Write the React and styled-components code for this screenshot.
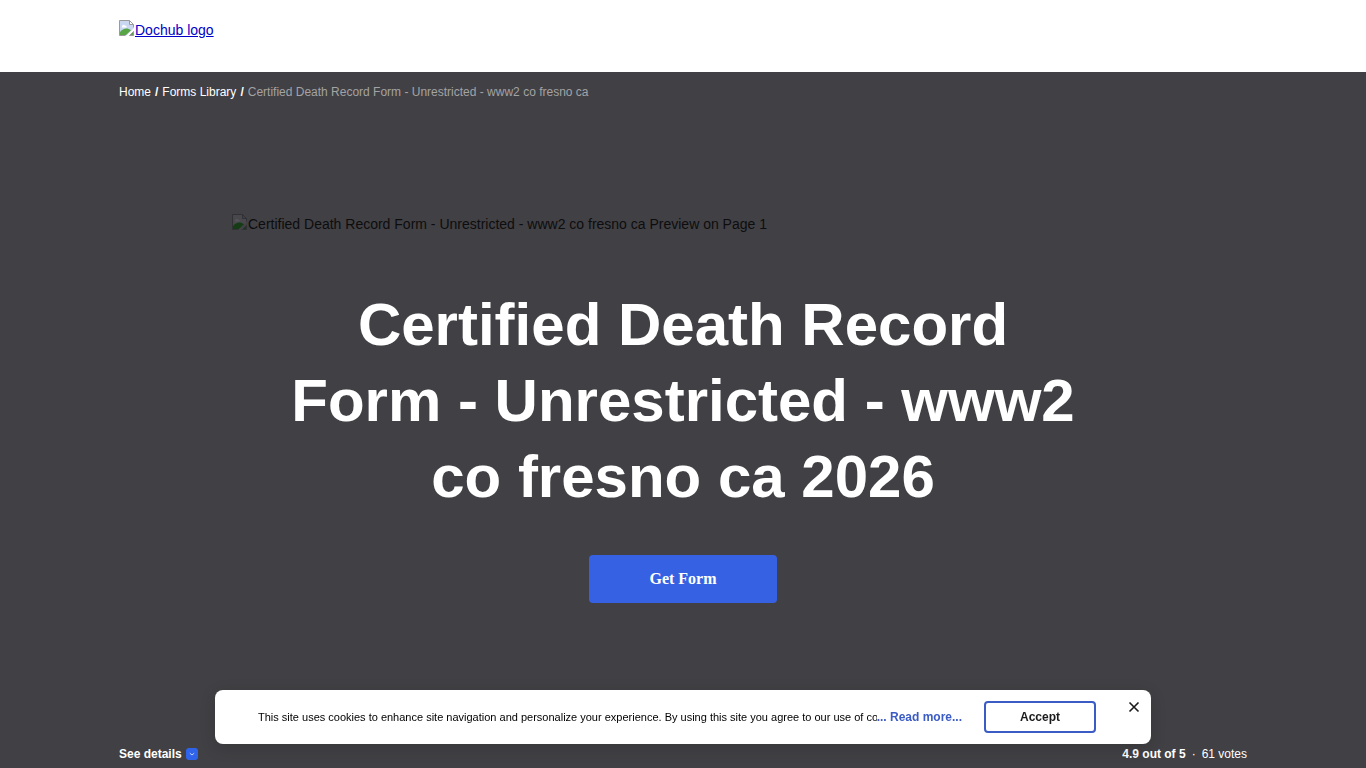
import React, {useState} from 'react';
import styled, {createGlobalStyle} from 'styled-components';

const GlobalStyle = createGlobalStyle`
	*,
	*::before,
	*::after {
		box-sizing: border-box;
	}

	body {
		margin: 0;
		font-family: 'Liberation Sans', Arial, sans-serif;
		font-size: 14px;
		line-height: 20px;
		color: #000;
	}
`;

const Page = styled.div`
	display: flex;
	flex-direction: column;
	min-height: 100vh;
`;

const Container = styled.div`
	width: 100%;
	max-width: 1176px;
	margin: 0 auto;
	padding: 0 24px;
`;

const Header = styled.header`
	flex: none;
	height: 72px;
	padding-top: 20px;
	background: #fff;
`;

const LogoLink = styled.a`
	display: inline-flex;
	align-items: flex-start;
	color: #0000c8;
`;

const Hero = styled.main`
	flex: 1;
	display: flex;
	flex-direction: column;
	background: #414044;
	color: #fff;
`;

const Breadcrumbs = styled.nav`
	display: flex;
	gap: 4px;
	padding-top: 10px;
	font-size: 12px;
`;

const Crumb = styled.a`
	color: #fff;
	text-decoration: none;
`;

const Slash = styled.span`
	font-weight: 700;
`;

const CurrentCrumb = styled.span`
	color: #a3a3a5;
`;

const HeroBody = styled.div`
	flex: 1;
	display: flex;
	flex-direction: column;
	align-items: center;
	padding: 112px 24px 40px;
`;

const Preview = styled.div`
	display: flex;
	align-items: flex-start;
	width: 100%;
	max-width: 902px;
	color: #0d0d0e;
`;

const Title = styled.h1`
	max-width: 800px;
	margin: 53px 0 40px;
	font-size: 60px;
	line-height: 76px;
	font-weight: 700;
	text-align: center;
`;

const GetFormButton = styled.button`
	min-width: 188px;
	height: 48px;
	border: 0;
	border-radius: 4px;
	background: #3761e3;
	color: #fff;
	font: 700 16px/24px 'Liberation Serif', 'Times New Roman', serif;
	cursor: pointer;
`;

const HeroFooter = styled.div`
	display: flex;
	justify-content: space-between;
	padding-bottom: 4px;
	font-size: 12px;
`;

const DetailsButton = styled.button`
	display: flex;
	align-items: center;
	gap: 4px;
	padding: 0;
	border: 0;
	background: none;
	color: inherit;
	font: inherit;
	font-weight: 700;
	cursor: pointer;
`;

const Rating = styled.div`
	display: flex;
	gap: 6px;
`;

const CookieBar = styled.section`
	position: fixed;
	left: 50%;
	bottom: 24px;
	transform: translateX(-50%);
	display: flex;
	align-items: center;
	width: calc(100% - 48px);
	max-width: 936px;
	height: 54px;
	padding: 0 9px 0 43px;
	border-radius: 8px;
	background: #fff;
	color: #1b1b1d;
	box-shadow: 0 4px 16px rgba(0, 0, 0, 0.16);
`;

const CookieText = styled.p`
	flex: 1;
	min-width: 0;
	margin: 0;
	overflow: hidden;
	color: #000;
	font-size: 11px;
	white-space: nowrap;
`;

const ReadMore = styled.a`
	color: #3b5bc5;
	font-size: 12px;
	font-weight: 700;
	text-decoration: none;
	white-space: nowrap;
`;

const AcceptButton = styled.button`
	width: 112px;
	height: 32px;
	margin: 0 30px 0 22px;
	border: 2px solid #3b5bc5;
	border-radius: 4px;
	background: #fff;
	color: #1b1b1d;
	font: inherit;
	font-size: 12px;
	font-weight: 700;
	cursor: pointer;
`;

const CloseButton = styled.button`
	align-self: flex-start;
	display: flex;
	margin-top: 9px;
	padding: 0;
	border: 0;
	background: none;
	color: #1b1b1d;
	cursor: pointer;
`;

const MissingImage = ({dimmed}) => {
	const line = dimmed ? '#313034' : '#9a9a9a';
	const hill = dimmed ? '#163c16' : '#57a545';

	return (
		<svg width="16" height="16" viewBox="0 0 16 16" aria-hidden="true">
			<path
				d="M0.5 0.5h10l4 4v4l-7 7h-7z"
				fill={dimmed ? '#48474c' : '#c9d7f1'}
			/>
			<path
				d="M3 6.5a1.6 1.6 0 0 1 3-.8a1.3 1.3 0 0 1 1.6 1.8H3z"
				fill={dimmed ? '#55545a' : '#fff'}
			/>
			<path d="M1 15v-3c3-3.6 7-4.6 11-1.8L7 15z" fill={hill} />
			<path d="M10.5 0.5v4h4z" fill={dimmed ? '#414044' : '#fff'} />
			<path
				d="M0.5 15.5v-15h10l4 4v3M10.5 0.5v4h4M0.5 15.5h6"
				fill="none"
				stroke={line}
			/>
			<path d="M10.5 15.5h4v-4z" fill={hill} stroke={line} />
		</svg>
	);
};

const DetailsIcon = () => (
	<svg width="12" height="12" viewBox="0 0 12 12" aria-hidden="true">
		<rect width="12" height="12" rx="3" fill="#2f63ea" />
		<path
			d="M3.8 5.2l2.2 1.8L8.2 5.2"
			fill="none"
			stroke="#c4d3ff"
			strokeWidth="1"
		/>
	</svg>
);

const CloseIcon = () => (
	<svg width="16" height="16" viewBox="0 0 16 16" aria-hidden="true">
		<path
			d="M3.5 3.5l9 9M12.5 3.5l-9 9"
			fill="none"
			stroke="currentColor"
			strokeWidth="1.6"
		/>
	</svg>
);

const formName = 'Certified Death Record Form - Unrestricted - www2 co fresno ca';

const CookieNotice = ({onClose}) => (
	<CookieBar aria-label="Cookies">
		<CookieText>
			This site uses cookies to enhance site navigation and personalize your
			experience. By using this site you agree to our use of cookies
		</CookieText>
		<ReadMore href="#cookies">... Read more...</ReadMore>
		<AcceptButton type="button" onClick={onClose}>
			Accept
		</AcceptButton>
		<CloseButton type="button" aria-label="Close" onClick={onClose}>
			<CloseIcon />
		</CloseButton>
	</CookieBar>
);

const App = () => {
	const [cookiesOpen, setCookiesOpen] = useState(true);

	return (
		<>
			<GlobalStyle />
			<Page>
				<Header>
					<Container>
						<LogoLink href="#home">
							<MissingImage />
							Dochub logo
						</LogoLink>
					</Container>
				</Header>
				<Hero>
					<Container>
						<Breadcrumbs aria-label="Breadcrumb">
							<Crumb href="#home">Home</Crumb>
							<Slash>/</Slash>
							<Crumb href="#forms">Forms Library</Crumb>
							<Slash>/</Slash>
							<CurrentCrumb>{formName}</CurrentCrumb>
						</Breadcrumbs>
					</Container>
					<HeroBody>
						<Preview>
							<MissingImage dimmed />
							{`${formName} Preview on Page 1`}
						</Preview>
						<Title>{`${formName} 2026`}</Title>
						<GetFormButton type="button">Get Form</GetFormButton>
					</HeroBody>
					<Container>
						<HeroFooter>
							<DetailsButton type="button">
								See details
								<DetailsIcon />
							</DetailsButton>
							<Rating>
								<strong>4.9 out of 5</strong>
								<span>·</span>
								<span>61 votes</span>
							</Rating>
						</HeroFooter>
					</Container>
				</Hero>
			</Page>
			{cookiesOpen && <CookieNotice onClose={() => setCookiesOpen(false)} />}
		</>
	);
};

export default App;
